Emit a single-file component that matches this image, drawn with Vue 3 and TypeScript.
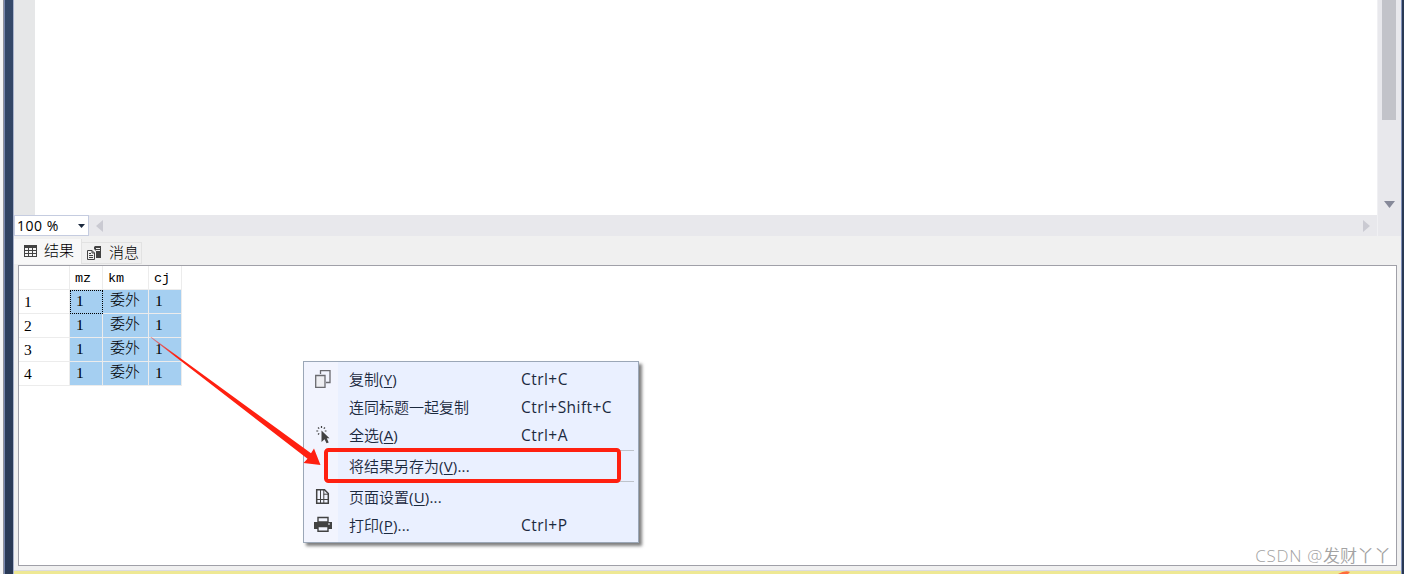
<template>
  <div class="window">
    <div class="frame-left"></div>
    <main class="workspace">
      <section class="editor">
        <div class="gutter"></div>
        <div class="code"></div>
        <div class="v-scroll">
          <div class="thumb"></div>
          <svg class="arrow-down" width="11" height="7"><path d="M0 0H11L5.5 7Z" fill="#868999" /></svg>
        </div>
      </section>

      <section class="zoom-bar">
        <div class="zoom-select">
          <span>100 %</span>
          <svg width="7" height="4"><path d="M0 0H7L3.5 4Z" fill="#1b293e" /></svg>
        </div>
        <div class="h-scroll">
          <svg width="7" height="12"><path d="M7 0V12L0 6Z" fill="#cacad2" /></svg>
          <svg width="7" height="12"><path d="M0 0V12L7 6Z" fill="#cacad2" /></svg>
        </div>
        <div class="corner"></div>
      </section>

      <section class="results">
        <nav class="tabs">
          <div class="tab active">
            <svg width="13" height="12" shape-rendering="crispEdges">
              <path d="M0 0H13V12H0Z" fill="#424242" />
              <path
                d="M1 3h3v2h-3zM5 3h3v2h-3zM9 3h3v2h-3zM1 6h3v2h-3zM5 6h3v2h-3zM9 6h3v2h-3zM1 9h3v2h-3zM5 9h3v2h-3zM9 9h3v2h-3z"
                fill="#f5f5f5"
              />
            </svg>
            <span>结果</span>
          </div>
          <div class="tab">
            <svg width="15" height="14" fill="none" stroke="#424242">
              <path d="M.5 4.5H5L7.5 7V13.5H.5ZM5 4.5V7H7.5M2 7.5H4M2 9.5H6M2 11.5H6" />
              <path d="M8 0H14V12H9V5L7 3V1Z" fill="#424242" stroke="none" />
              <path d="M9 2.5H13M9 4.5H13" stroke="#f0f0f0" />
            </svg>
            <span>消息</span>
          </div>
        </nav>

        <div class="grid-panel">
          <div class="grid">
            <div class="cell head"></div>
            <div v-for="name in columns" :key="name" class="cell head">{{ name }}</div>
            <template v-for="(row, r) in rows" :key="r">
              <div class="cell row-no">{{ r + 1 }}</div>
              <div
                v-for="(value, c) in row"
                :key="c"
                class="cell selected"
                :class="{ focused: r === 0 && c === 0, cjk: c === 1 }"
              >
                {{ value }}
              </div>
            </template>
          </div>
        </div>
      </section>
      <footer class="status">
        <svg width="24" height="3"><path d="M8 3Q15 -1 20 1L18 3Z" fill="#ff6b3d" /></svg>
      </footer>
    </main>
    <div class="frame-right"></div>

    <div class="menu">
      <template v-for="item in menuItems" :key="item.label">
        <div v-if="item.separated" class="separator"></div>
        <div class="menu-item" :class="{ tall: item.icon === 'save', last: item.icon === 'page' || item.icon === 'print' }">
          <span class="icon">
            <svg v-if="item.icon === 'copy'" width="17" height="18" fill="none" stroke="#6a6a6f">
              <path d="M6.5 4V.7H16V12.5H12" stroke-width="1.3" />
              <path d="M1.7 5.5H11V17.3H1.7Z" fill="#eeeef2" stroke-width="1.3" />
            </svg>
            <svg v-else-if="item.icon === 'select'" class="shifted" width="17" height="18">
              <path
                d="M5.5 0V2M2 1.5L3.2 2.7M9 1.5L7.8 2.7M.3 5H2.2M8.8 5H10.5M2 8.5L3.2 7.3"
                stroke="#424242"
                stroke-width="1.2"
                fill="none"
              />
              <path d="M5.5 4.5L13.5 12.3H10.8L12.7 16.5L10.5 17.3L8.6 13.3L5.5 16Z" fill="#424242" />
            </svg>
            <svg v-else-if="item.icon === 'page'" width="17" height="18" fill="none" stroke="#424242">
              <path d="M2.7 1.7H10.5L14.3 5.5V15.3H2.7Z" stroke-width="1.5" />
              <path d="M9.8 1.5V6.2H14.5M6.5 2V15.5M9.8 6V15.5M3 11.5H14" />
            </svg>
            <svg v-else-if="item.icon === 'print'" width="18" height="18">
              <path d="M4 1.5H14V6H4Z" fill="#f2f4fe" stroke="#424242" stroke-width="1.4" />
              <path d="M0 6H18V13H0Z" fill="#424242" />
              <path d="M4 10.5H14V15.3H4Z" fill="#f2f4fe" stroke="#424242" stroke-width="1.4" />
              <path d="M14 8H16" stroke="#f2f4fe" />
            </svg>
          </span>
          <span class="label">
            {{ item.label }}<span v-if="item.accessKey" class="latin">(<u>{{ item.accessKey }}</u>){{ item.suffix }}</span>
          </span>
          <span class="shortcut">{{ item.shortcut }}</span>
        </div>
      </template>
    </div>

    <svg class="annotation" width="480" height="160" viewBox="150 330 480 160">
      <defs>
        <linearGradient id="tail" gradientUnits="userSpaceOnUse" x1="150" y1="337" x2="176" y2="356">
          <stop offset="0" stop-color="#ff2010" stop-opacity="0.4" />
          <stop offset="1" stop-color="#ff2010" />
        </linearGradient>
      </defs>
      <path d="M150.5 337.5L151 336.8L311 453.3L314 448.5L320.5 465L303.5 463L307.5 458.7Z" fill="url(#tail)" />
      <rect x="326" y="450" width="293" height="31" rx="2.5" fill="none" stroke="#ff2010" stroke-width="4" />
    </svg>
    <div class="watermark"><span>CSDN @</span>发财丫丫</div>
  </div>
</template>

<script setup lang="ts">
interface MenuItem {
  label: string;
  accessKey?: string;
  suffix?: string;
  shortcut?: string;
  icon?: "copy" | "select" | "save" | "page" | "print";
  separated?: boolean;
}

const columns = ["mz", "km", "cj"];
const rows = Array.from({ length: 4 }, () => ["1", "委外", "1"]);

const menuItems: MenuItem[] = [
  { label: "复制", accessKey: "Y", shortcut: "Ctrl+C", icon: "copy" },
  { label: "连同标题一起复制", shortcut: "Ctrl+Shift+C" },
  { label: "全选", accessKey: "A", shortcut: "Ctrl+A", icon: "select" },
  { label: "将结果另存为", accessKey: "V", suffix: "...", icon: "save", separated: true },
  { label: "页面设置", accessKey: "U", suffix: "...", icon: "page", separated: true },
  { label: "打印", accessKey: "P", suffix: "...", shortcut: "Ctrl+P", icon: "print" },
];
</script>

<style>
body {
  overflow: hidden;
  background: #ffffff;
}
</style>

<style scoped>
.window {
  position: relative;
  display: flex;
  width: 1404px;
  height: 574px;
  overflow: hidden;
  font-family: "Open Sans", "Noto Sans CJK SC", sans-serif;
  font-size: 15px;
  font-weight: 350;
  color: #1b293e;
}

.window * {
  box-sizing: border-box;
}

svg {
  display: block;
  flex: none;
}

.frame-left {
  flex: none;
  width: 14px;
  background: linear-gradient(#35496a, #293955);
  border-left: 3px solid #f5f5f5;
  border-right: 1px solid #a9b3cc;
  box-shadow: inset 1px 0 #8f919c, inset 2px 0 #7686ae;
}

.frame-right {
  flex: none;
  width: 3px;
  background: #293955;
  border-left: 1px solid #8090b8;
}

.workspace {
  display: flex;
  flex-direction: column;
  flex: 1;
  min-width: 0;
  background: #f0f0f0;
}

.editor {
  display: flex;
  height: 215px;
}

.gutter {
  width: 21px;
  background: #e6e7e8;
}

.code {
  flex: 1;
  background: #ffffff;
}

.v-scroll {
  display: flex;
  flex-direction: column;
  justify-content: space-between;
  width: 24px;
  padding: 0 5px 7px 4px;
  background: #e8e8ec;
  border-left: 1px solid #f0f0f3;
}

.thumb {
  width: 14px;
  height: 120px;
  background: #c2c3c9;
}

.arrow-down {
  margin-left: 2px;
}

.zoom-bar {
  display: flex;
  height: 21px;
}

.zoom-select {
  display: flex;
  align-items: center;
  justify-content: space-between;
  width: 75px;
  padding: 0 3px 0 2px;
  background: #ffffff;
  border: 1px solid #c5cce0;
  font-size: 14px;
  font-weight: 400;
  letter-spacing: 0.5px;
  color: #000000;
}

.h-scroll {
  display: flex;
  flex: 1;
  align-items: center;
  justify-content: space-between;
  padding: 0 7px;
  background: #e8e8ec;
}

.corner {
  width: 24px;
  background: #e8e8ec;
  border-left: 1px solid #f0f0f3;
}

.results {
  display: flex;
  flex-direction: column;
  height: 335px;
  padding-right: 4px;
  border-bottom: 1px solid #dcdce0;
}

.tabs {
  display: flex;
  align-items: flex-end;
  height: 29px;
  padding-bottom: 1px;
  font-weight: 300;
  color: #000000;
}

.tab {
  display: flex;
  align-items: center;
  gap: 7px;
  width: 60px;
  height: 22px;
  padding-left: 5px;
  border: 1px solid #e2e2e2;
  border-left: 0;
  line-height: 20px;
}

.tab span {
  position: relative;
  top: -1px;
}

.tab.active {
  width: 68px;
  height: 25px;
  padding: 0 0 1px 10px;
  background: #f8f8f8;
  border: 0;
  border-right: 1px solid #e2e2e2;
}

.grid-panel {
  flex: none;
  height: 301px;
  margin-left: 4px;
  background: #ffffff;
  border: 1px solid #a0a0a8;
}

.grid {
  display: grid;
  grid-template-columns: 51px 33px 46px 33px;
  grid-auto-rows: 24px;
  width: max-content;
  color: #000000;
}

.cell {
  padding-left: 6px;
  border-right: 1px solid #ececec;
  border-bottom: 1px solid #ececec;
  font-family: "Liberation Serif", "Noto Sans CJK SC", serif;
  font-size: 15.5px;
  line-height: 22px;
}

.cell.head {
  padding-left: 5px;
  font-family: "Liberation Mono", monospace;
  font-size: 13.5px;
  line-height: 26px;
}

.cell.row-no {
  padding-left: 5px;
  line-height: 24px;
}

.selected {
  background: #a5cff1;
}

.cell.focused {
  border: 1px dotted #000000;
  padding-left: 5px;
  line-height: 20px;
}

.cell.cjk {
  padding-left: 7px;
  font-size: 15px;
  font-weight: 300;
  line-height: 21px;
}

.status {
  display: flex;
  justify-content: flex-end;
  flex: none;
  height: 3px;
  padding-right: 47px;
  background: #eee894;
}

.menu {
  position: absolute;
  left: 303px;
  top: 361px;
  width: 336px;
  height: 182px;
  padding: 4px 0;
  background: linear-gradient(90deg, #f2f4fe 34px, #eaf0ff 34px);
  border: 1px solid #9ba7b7;
  box-shadow: 3px 3px 3px rgba(0, 0, 0, 0.5);
}

.menu-item {
  display: flex;
  align-items: center;
  height: 28px;
  padding-bottom: 3px;
}

.menu-item.tall {
  height: 29px;
}

.menu-item.last {
  padding-bottom: 1px;
}

.icon {
  width: 45px;
  padding-left: 10px;
}

.icon .shifted {
  margin-left: 2px;
}

.label {
  width: 172px;
  white-space: nowrap;
}

.label .latin {
  font-weight: 400;
  letter-spacing: 0.2px;
}

.label u {
  text-underline-offset: 2px;
}

.shortcut {
  font-weight: 400;
  font-size: 15.5px;
  letter-spacing: 0.45px;
}

.separator {
  height: 2px;
  margin: 0 4px 0 38px;
  border-top: 1px solid #bec3cb;
}

.annotation {
  position: absolute;
  left: 150px;
  top: 330px;
}

.watermark {
  position: absolute;
  right: 13px;
  bottom: 6px;
  font-size: 17px;
  line-height: 24px;
  color: #a2a2a2;
}

.watermark span {
  letter-spacing: 0.7px;
}
</style>
